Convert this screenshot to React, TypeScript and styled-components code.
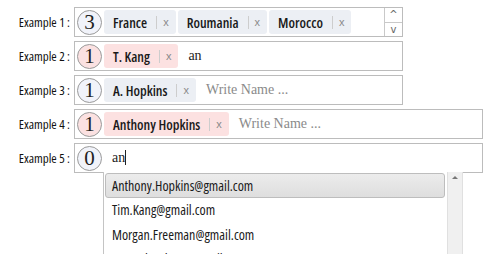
import React from 'react';
import styled, { createGlobalStyle } from 'styled-components';

const GlobalStyle = createGlobalStyle`
  html, body {
    margin: 0;
    padding: 0;
    background: #ffffff;
    overflow: hidden;
  }
`;

const condensed = `
  font-family: 'Open Sans', 'Roboto', sans-serif;
  font-stretch: 75%;
`;

const Page = styled.div`
  width: 500px;
  height: 254px;
  padding-top: 7px;
  box-sizing: border-box;
  display: flex;
  flex-direction: column;
  gap: 4px;
  position: relative;
  overflow: hidden;
`;

const Row = styled.div`
  display: flex;
  align-items: center;
  height: 30px;
`;

const Label = styled.div`
  width: 70px;
  padding-right: 4px;
  text-align: right;
  ${condensed}
  font-size: 13px;
  font-weight: 500;
  color: #111;
  white-space: nowrap;
`;

const Field = styled.div<{ $width: number }>`
  width: ${({ $width }) => $width}px;
  height: 30px;
  box-sizing: border-box;
  border: 1px solid #bcbcbc;
  display: flex;
  align-items: center;
  padding-left: 2px;
  gap: 2px;
`;

const Count = styled.div<{ $pink?: boolean }>`
  width: 25px;
  height: 25px;
  box-sizing: border-box;
  border-radius: 50%;
  border: 1px solid #9a9a9a;
  background: ${({ $pink }) => ($pink ? '#fbe1e1' : '#f1f3fa')};
  display: flex;
  align-items: center;
  justify-content: center;
  font-family: 'Liberation Serif', serif;
  font-size: 21px;
  color: #222;
  flex-shrink: 0;
`;

const Tags = styled.div`
  display: flex;
  gap: 2px;
`;

const Tag = styled.div<{ $pink?: boolean }>`
  height: 24px;
  box-sizing: border-box;
  border-radius: 3px;
  background: ${({ $pink }) => ($pink ? '#fce1e1' : '#eceff4')};
  display: flex;
  align-items: center;
  padding: 0 7px 0 9px;
  ${condensed}
  font-weight: 550;
  font-size: 14px;
  color: #1a1a1a;
  white-space: nowrap;
`;

const Sep = styled.span`
  width: 1px;
  height: 13px;
  background: #cdcdcd;
  margin: 0 6px 0 9px;
`;

const Close = styled.span`
  font-family: 'Liberation Sans', sans-serif;
  font-weight: normal;
  font-size: 11px;
  color: #8a8a8a;
`;

const Typed = styled.span`
  font-family: 'Liberation Serif', serif;
  font-size: 14px;
  color: #222;
  margin-left: 8px;
`;

const Placeholder = styled.span`
  font-family: 'Liberation Serif', serif;
  font-size: 14px;
  color: #8a8a8a;
  margin-left: 8px;
`;

const Caret = styled.span`
  display: inline-block;
  width: 1px;
  height: 15px;
  background: #222;
  vertical-align: -3px;
`;

const Spinner = styled.div`
  margin-left: auto;
  width: 17px;
  height: 100%;
  border-left: 1px solid #c9c9c9;
  display: flex;
  flex-direction: column;
`;

const SpinBtn = styled.div<{ $top?: boolean }>`
  flex: 1;
  display: flex;
  align-items: center;
  justify-content: center;
  font-family: 'DejaVu Sans', sans-serif;
  font-size: 10px;
  color: #666;
  border-bottom: ${({ $top }) => ($top ? '1px solid #c9c9c9' : 'none')};
`;

const Dropdown = styled.div`
  position: absolute;
  left: 103px;
  top: 172px;
  width: 360px;
  height: 82px;
  display: flex;
  background: #fff;
  overflow: hidden;
`;

const List = styled.div`
  flex: 1;
  border-left: 1px solid #c4c4c4;
  display: flex;
  flex-direction: column;
  padding: 1px 2px 0 1px;
`;

const Item = styled.div<{ $active?: boolean }>`
  height: 24.5px;
  flex-shrink: 0;
  box-sizing: border-box;
  display: flex;
  align-items: center;
  padding-left: 6px;
  ${condensed}
  font-size: 14px;
  color: #1a1a1a;
  border: 1px solid ${({ $active }) => ($active ? '#bdbdbd' : 'transparent')};
  border-radius: 3px;
  background: ${({ $active }) =>
    $active ? 'linear-gradient(#ececec, #dedede)' : 'transparent'};
`;

const Scrollbar = styled.div`
  width: 14px;
  background: #f0f0f0;
  border-left: 1px solid #e0e0e0;
  border-right: 1px solid #e0e0e0;
  display: flex;
  justify-content: center;
  padding-top: 4px;
`;

const ArrowUp = styled.div`
  width: 0;
  height: 0;
  border-left: 3px solid transparent;
  border-right: 3px solid transparent;
  border-bottom: 3px solid #777;
`;

const TagX: React.FC<{ text: string; pink?: boolean }> = ({ text, pink }) => (
  <Tag $pink={pink}>
    {text}
    <Sep />
    <Close>x</Close>
  </Tag>
);

const App: React.FC = () => {
  const emails = [
    'Anthony.Hopkins@gmail.com',
    'Tim.Kang@gmail.com',
    'Morgan.Freeman@gmail.com',
    'Samuel.Jackson@gmail.com',
  ];

  return (
    <Page>
      <GlobalStyle />
      <Row>
        <Label>Example 1 :</Label>
        <Field $width={329}>
          <Count>3</Count>
          <Tags>
            <TagX text="France" />
            <TagX text="Roumania" />
            <TagX text="Morocco" />
          </Tags>
          <Spinner>
            <SpinBtn $top>^</SpinBtn>
            <SpinBtn>v</SpinBtn>
          </Spinner>
        </Field>
      </Row>
      <Row>
        <Label>Example 2 :</Label>
        <Field $width={329}>
          <Count $pink>1</Count>
          <TagX text="T. Kang" pink />
          <Typed>an</Typed>
        </Field>
      </Row>
      <Row>
        <Label>Example 3 :</Label>
        <Field $width={329}>
          <Count>1</Count>
          <TagX text="A. Hopkins" />
          <Placeholder>Write Name ...</Placeholder>
        </Field>
      </Row>
      <Row>
        <Label>Example 4 :</Label>
        <Field $width={409}>
          <Count $pink>1</Count>
          <TagX text="Anthony Hopkins" pink />
          <Placeholder>Write Name ...</Placeholder>
        </Field>
      </Row>
      <Row>
        <Label>Example 5 :</Label>
        <Field $width={409}>
          <Count>0</Count>
          <Typed>
            an
            <Caret />
          </Typed>
        </Field>
      </Row>
      <Dropdown>
        <List>
          {emails.map((e, i) => (
            <Item key={e} $active={i === 0}>
              {e}
            </Item>
          ))}
        </List>
        <Scrollbar>
          <ArrowUp />
        </Scrollbar>
      </Dropdown>
    </Page>
  );
};

export default App;
